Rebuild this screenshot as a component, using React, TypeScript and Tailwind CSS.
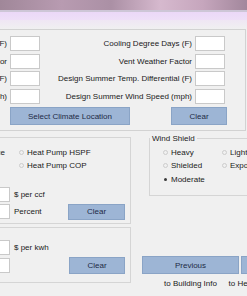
function Box({ className = "" }: { className?: string }) {
  return <div className={`h-[15px] shrink-0 bg-white border border-[#c9c9c9] ${className}`} />;
}

function Btn({ label, className = "" }: { label: string; className?: string }) {
  return (
    <button
      className={`flex shrink-0 items-center justify-center whitespace-nowrap bg-[#9db5d5] border border-[#8aa4c6] text-[#1d2b45] ${className}`}
    >
      {label}
    </button>
  );
}

function Radio({ label, checked = false }: { label: string; checked?: boolean }) {
  return (
    <div className="flex items-center whitespace-nowrap">
      <span
        className={`flex h-[5px] w-[5px] shrink-0 items-center justify-center rounded-full border ${
          checked ? "border-transparent" : "border-[#cccccc]"
        }`}
      >
        {checked && <span className="h-[3px] w-[3px] rounded-full bg-[#3a3a3a]" />}
      </span>
      <span className="ml-[3px]">{label}</span>
    </div>
  );
}

const climateRows = [
  { left: "Heating Degree Days (F)", right: "Cooling Degree Days (F)" },
  { left: "Heat Weather Factor", right: "Vent Weather Factor" },
  { left: "Design Winter Temp. Differential (F)", right: "Design Summer Temp. Differential (F)" },
  { left: "Design Winter Wind Speed (mph)", right: "Design Summer Wind Speed (mph)" },
];

export default function App() {
  return (
    <div className="h-[296px] w-[247px] overflow-hidden bg-[#f0f0f0] font-['Liberation_Sans',Arial,sans-serif] text-[8px] leading-[9px] text-[#1a1a1a]">
      {/* window chrome */}
      <div className="h-[10px] bg-[linear-gradient(90deg,#a08799_0%,#b89bb1_25%,#ab90a5_45%,#d6b9ce_65%,#c6a6bd_82%,#a2879c_100%)]" />
      <div className="h-[2px] bg-[#cdc6d6]" />
      <div className="h-[8px] bg-[linear-gradient(180deg,#ebd8f8,#eedff7)]" />
      <div className="h-[9px] bg-[linear-gradient(180deg,#efe6f4,#f0f0f0)]" />

      {/* climate */}
      <div className="mr-[1px] border-b border-r border-t border-[#d2d2d2] pb-[5px] pt-[6px]">
        <div className="flex flex-col gap-[2.5px]">
          {climateRows.map((r) => (
            <div key={r.right} className="flex h-[15px] items-center">
              <div className="flex w-[7px] shrink-0 justify-end whitespace-nowrap">{r.left}</div>
              <Box className="ml-[3px] w-[30px]" />
              <div className="flex w-[152px] shrink-0 justify-end whitespace-nowrap">{r.right}</div>
              <Box className="ml-[3px] w-[30px]" />
            </div>
          ))}
        </div>
        <div className="mt-[3.5px] flex">
          <Btn label="Select Climate Location" className="ml-[10px] h-[18px] w-[120px]" />
          <Btn label="Clear" className="ml-[41px] h-[18px] w-[56px]" />
        </div>
      </div>

      <div className="flex items-start">
        {/* left column */}
        <div className="w-[131px] shrink-0">
          <div className="mt-[6px] border-b border-r border-t border-[#d5d5d5] pb-[3.5px] pt-[7.5px]">
            <div className="flex h-[13px] items-center">
              <div className="flex w-[5px] shrink-0 justify-end whitespace-nowrap">Furnace</div>
              <div className="ml-[14px]">
                <Radio label="Heat Pump HSPF" />
              </div>
            </div>
            <div className="flex h-[13px] items-center">
              <div className="w-[5px] shrink-0" />
              <div className="ml-[14px]">
                <Radio label="Heat Pump COP" />
              </div>
            </div>
            <div className="mt-[15.5px] flex h-[15px] items-center">
              <Box className="w-[10px] border-l-0" />
              <span className="ml-[4px]">$ per ccf</span>
            </div>
            <div className="mt-[1.5px] flex h-[16px] items-center">
              <Box className="w-[10px] border-l-0" />
              <span className="ml-[4px] w-[54px] shrink-0">Percent</span>
              <Btn label="Clear" className="h-[16px] w-[57px]" />
            </div>
          </div>

          <div className="mt-[3px] border-b border-r border-t border-[#d5d5d5] pb-[8px] pt-[12px]">
            <div className="flex h-[15px] items-center">
              <Box className="w-[10px] border-l-0" />
              <span className="ml-[4px]">$ per kwh</span>
            </div>
            <div className="mt-[2px] flex h-[17px] items-center">
              <Box className="w-[10px] border-l-0" />
              <div className="w-[59px] shrink-0" />
              <Btn label="Clear" className="h-[17px] w-[56px]" />
            </div>
          </div>
        </div>

        {/* right column */}
        <div className="flex-1">
          <fieldset className="ml-[18px] mt-[3px] w-[120px] border border-[#d5d5d5] pb-[9.25px]">
            <legend className="px-[2px] leading-[9px]">Wind Shield</legend>
            <div className="mt-[2.25px] grid grid-cols-[59px_auto] pl-[13px]">
              <div className="flex h-[13.5px] items-center"><Radio label="Heavy" /></div>
              <div className="flex h-[13.5px] items-center"><Radio label="Light" /></div>
              <div className="flex h-[13.5px] items-center"><Radio label="Shielded" /></div>
              <div className="flex h-[13.5px] items-center"><Radio label="Exposed" /></div>
              <div className="flex h-[13.5px] items-center"><Radio label="Moderate" checked /></div>
            </div>
          </fieldset>

          <div className="ml-[11px] mt-[60px] flex gap-[2px]">
            <div className="flex w-[97px] shrink-0 flex-col items-center">
              <Btn label="Previous" className="h-[18px] w-full" />
              <span className="mt-[4.5px] whitespace-nowrap">to Building Info</span>
            </div>
            <div className="flex w-[97px] shrink-0 flex-col items-center">
              <Btn label="Next" className="h-[18px] w-full" />
              <span className="mt-[4.5px] whitespace-nowrap">to Heating and Cooling Equipment</span>
            </div>
          </div>
        </div>
      </div>
    </div>
  );
}
